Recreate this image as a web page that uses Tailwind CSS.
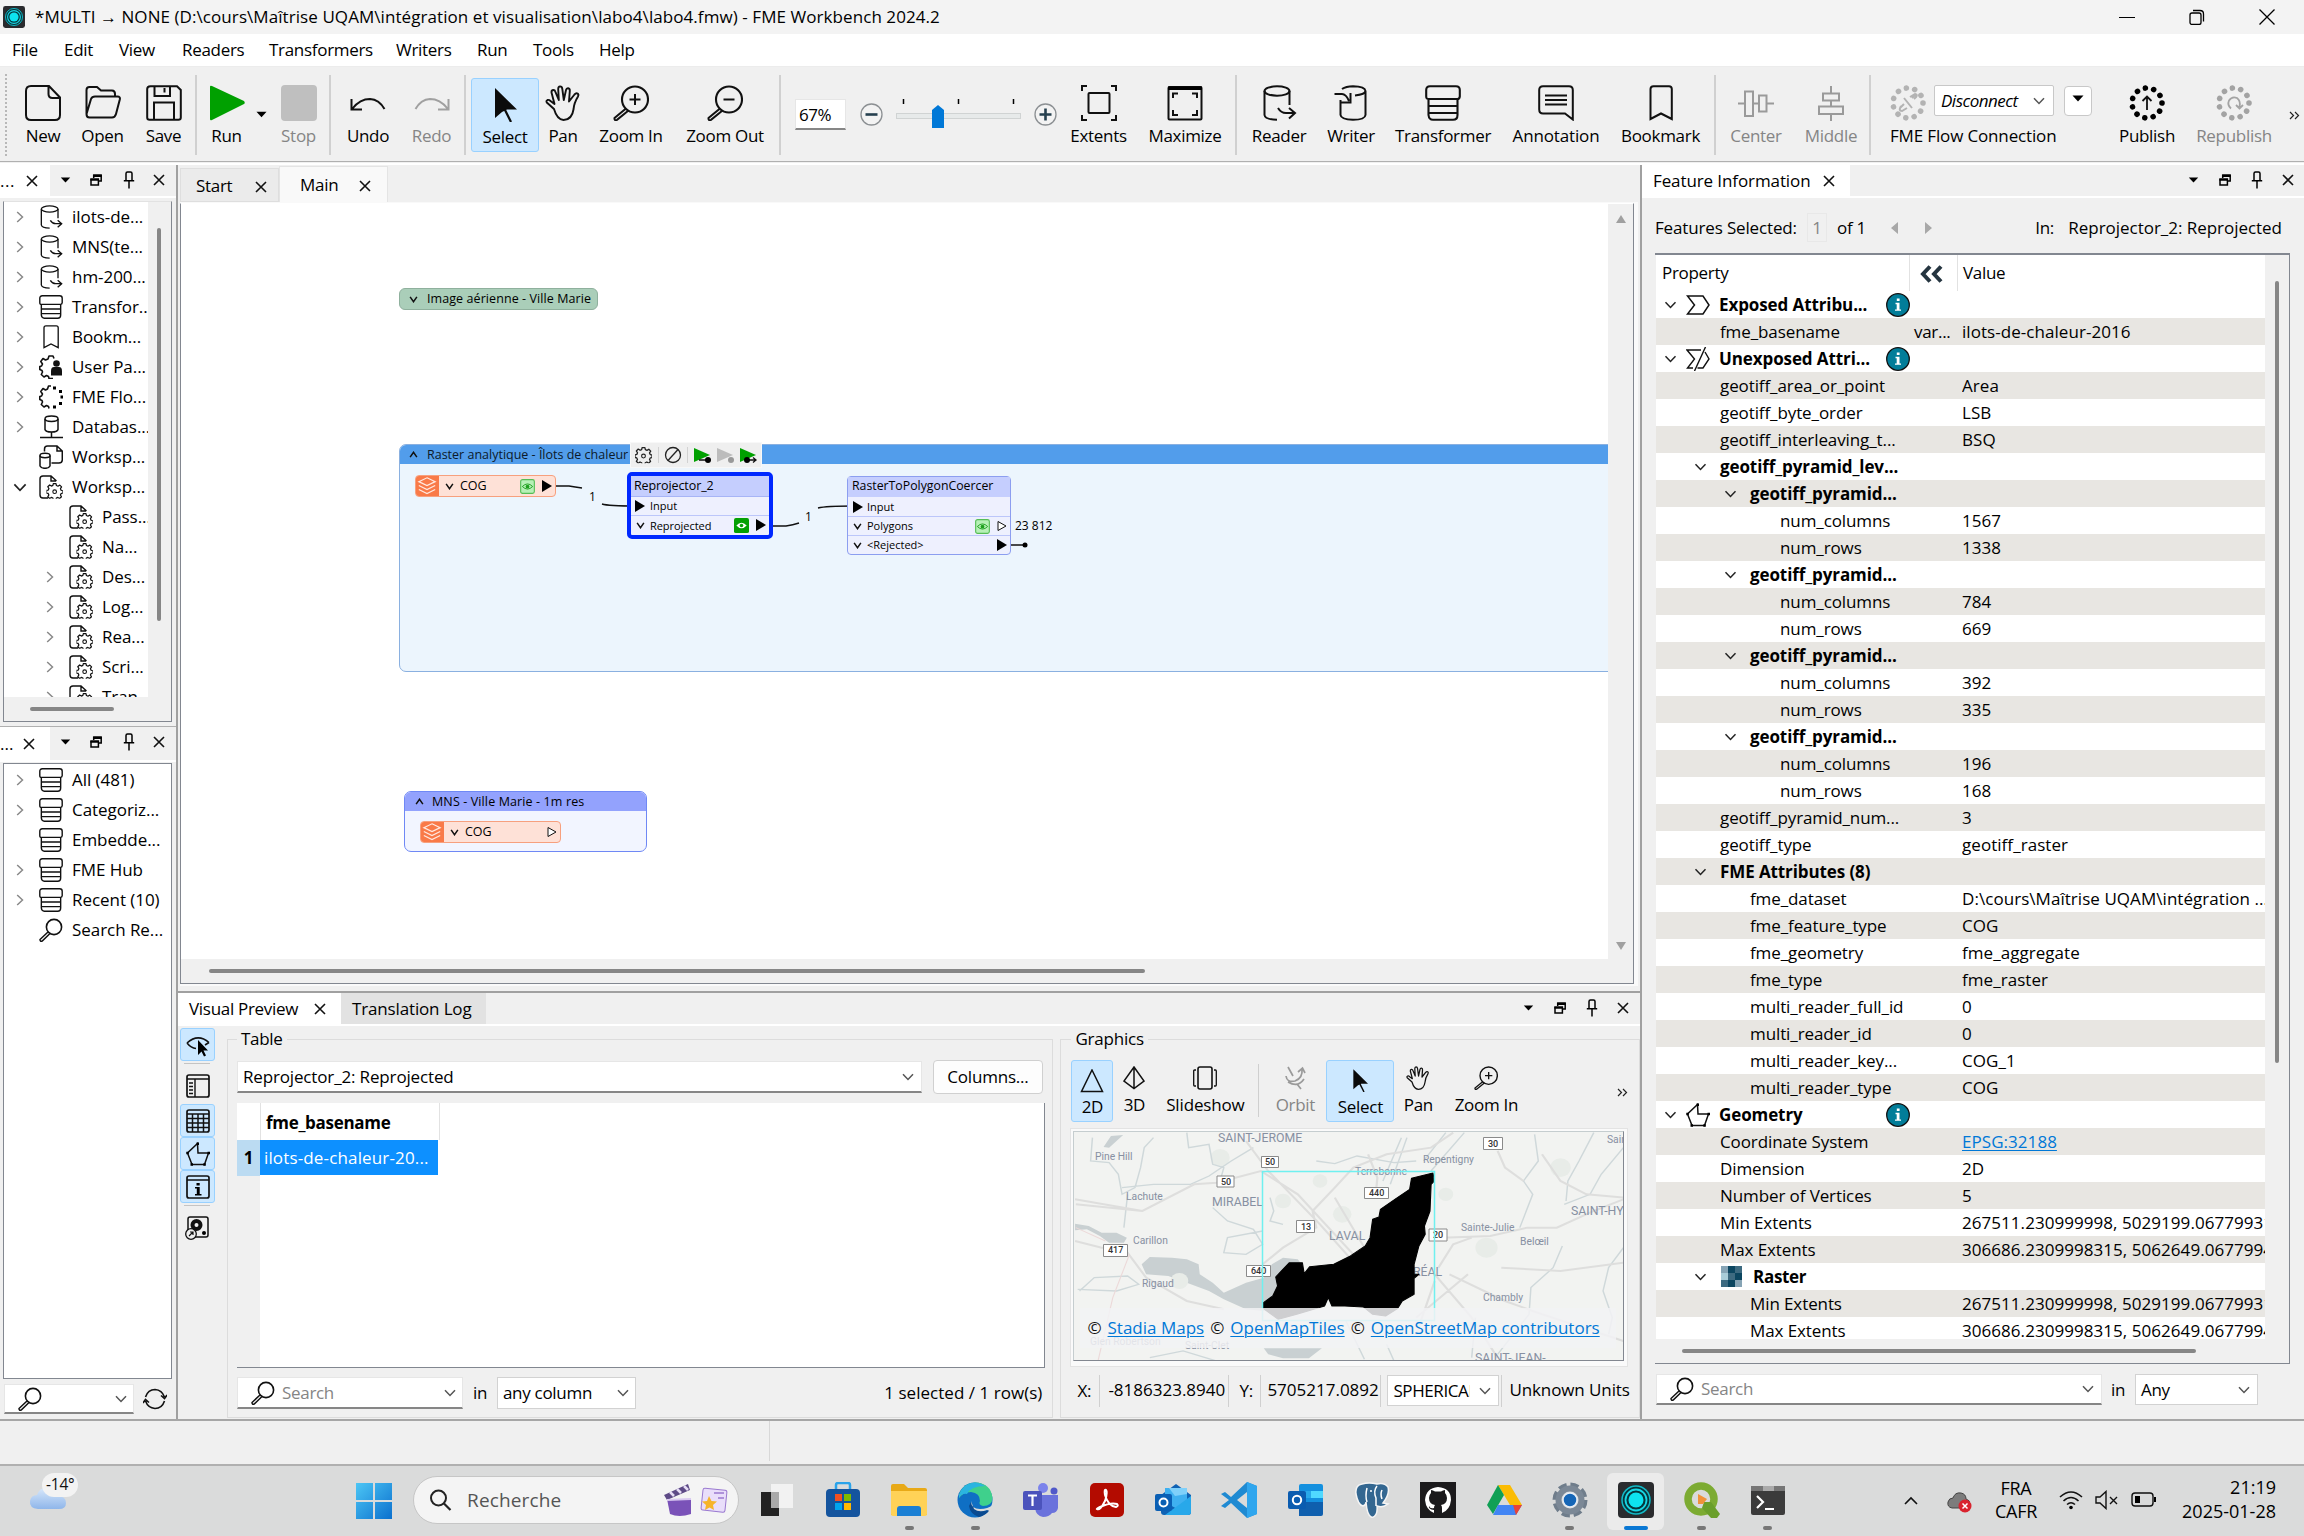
<!DOCTYPE html>
<html lang="fr">
<head>
<meta charset="utf-8">
<title>FME Workbench</title>
<script src="https://cdn.jsdelivr.net/npm/@tailwindcss/browser@4"></script>
</head>
<body class="w-[2304px] h-[1536px] overflow-hidden bg-[#f0f0f0] text-black font-['Open_Sans',sans-serif] text-[17px] leading-[24px] tracking-[-0.3px] whitespace-nowrap">
<svg class="hidden">
  <defs>
    <symbol id="x" viewBox="0 0 12 12"><path d="M1 1L11 11M11 1L1 11" fill="none" stroke="#111" stroke-width="1.6"/></symbol>
    <symbol id="caret" viewBox="0 0 12 7"><path d="M0.5 0.5H11.5L6 6.5Z"/></symbol>
    <symbol id="restore" viewBox="0 0 12 12"><path d="M3.7 4V1.2H11.2V7H8.6M1 5.2H8.4V11H1Z" fill="none" stroke="#000" stroke-width="1.5"/><path d="M3.2 0.6h8.5v2.4h-8.5zM.4 4.6h8.6v2.2H.4z"/></symbol>
    <symbol id="pin" viewBox="0 0 12 18"><path d="M3 9.5V2.6Q3 1 4.5 1h3Q9 1 9 2.600V9.500M.8 9.800H11.200M6 10V17.500" fill="none" stroke="#000" stroke-width="1.500"/></symbol>
    <symbol id="chev" viewBox="0 0 12 8"><path d="M1 1.200L6 6.500L11 1.200" fill="none" stroke="currentColor" stroke-width="1.500"/></symbol>
    <symbol id="chevb" viewBox="0 0 12 9"><path d="M1.500 1L6 7.500L10.500 1" fill="none" stroke="#111" stroke-width="2"/></symbol>
    <symbol id="new" viewBox="0 0 36 36"><path d="M6 1H24L35 12.500V30Q35 35 30 35H6Q1 35 1 30V6Q1 1 6 1ZM23.500 1.500V9Q23.500 13 27.500 13H34.500" fill="none" stroke="#111" stroke-width="2"/></symbol>
    <symbol id="open" viewBox="0 0 36 36"><path d="M1.500 29V5Q1.500 2 4.500 2H12L16 5.500H27Q30 5.500 30 9V11.500M1.500 29L6 14Q7 11.500 10 11.500H32.500Q35.500 11.500 34.800 14.500L31 29Q30 32.500 27 32.500H4.500Q1.500 32.500 1.500 29Z" fill="none" stroke="#111" stroke-width="2"/></symbol>
    <symbol id="save" viewBox="0 0 36 36"><path d="M4.500 1.200H31L34.800 5V32.500Q34.800 34.800 32.500 34.800H3.500Q1.200 34.800 1.200 32.500V4Q1.200 1.200 4.500 1.200ZM8 34.500V17.500H28V34.500M8.500 1.500V11H24V1.500M18.500 3V7.500" fill="none" stroke="#111" stroke-width="2"/></symbol>
    <symbol id="undo" viewBox="0 0 36 36"><path d="M1.500 14V24.500H12M2.500 23.500Q10 14 20 14Q29 14.500 34.500 24" fill="none" stroke="currentColor" stroke-width="2"/></symbol>
    <symbol id="arrow" viewBox="0 0 36 36"><path d="M8 2V32L15 26L20 23.500L30 23.500Z" fill="#0b0b0b"/><path d="M17.500 23L24 36" stroke="#0b0b0b" stroke-width="2.200"/></symbol>
    <symbol id="hand" viewBox="0 0 36 36"><path d="M9 24L1.800 17.500Q.8 15.800 2.500 15Q4 14.500 5.500 16L9.500 19L6.500 7.500Q6.300 5.300 8 5Q9.800 4.800 10.400 6.800L13.800 15L13.200 4Q13.200 1.600 15.100 1.400Q17 1.400 17.300 3.800L18.800 15L21 5Q21.500 3 23.200 3.200Q25 3.500 24.800 5.800L24 16.500L29.500 9.500Q31 7.800 32.600 8.600Q34 9.600 33 11.500Q29 18 28.600 24Q27 35 18.500 35Q12 34.500 9 24Z" fill="none" stroke="#111" stroke-width="1.900" stroke-linejoin="round"/></symbol>
    <symbol id="zin" viewBox="0 0 36 36"><circle cx="22" cy="14.500" r="13" fill="none" stroke="#111" stroke-width="2.100"/><path d="M13 23.500L1.500 33Q1.200 36 4 34.800L15.500 25.500M22 9V20M16.500 14.500H27.500" fill="none" stroke="#111" stroke-width="2"/></symbol>
    <symbol id="zout" viewBox="0 0 36 36"><circle cx="22" cy="14.500" r="13" fill="none" stroke="#111" stroke-width="2.100"/><path d="M13 23.500L1.500 33Q1.200 36 4 34.800L15.500 25.500M16.500 14.500H27.500" fill="none" stroke="#111" stroke-width="2"/></symbol>
    <symbol id="mag" viewBox="0 0 24 24"><circle cx="15" cy="9" r="7.600" fill="none" stroke="#111" stroke-width="1.600"/><path d="M9 14L1 21.500Q1 23.800 3.200 23L11 15.500" fill="none" stroke="#111" stroke-width="1.500"/></symbol>
    <symbol id="extents" viewBox="0 0 36 36"><rect x="7.500" y="8" width="21" height="20" rx="1" fill="none" stroke="#111" stroke-width="2"/><path d="M1 6V1H6M30 1H35V6M35 30V35H30M6 35H1V30" fill="none" stroke="#111" stroke-width="2"/></symbol>
    <symbol id="maxi" viewBox="0 0 36 36"><rect x="1.500" y="2" width="33" height="32.500" rx="1" fill="none" stroke="#111" stroke-width="2"/><path d="M1 1.500H35V5H1Z"/><path d="M6 13V8.500H11M25 8.500H30V13M30 25V30H25M11 30H6V25" fill="none" stroke="#111" stroke-width="2"/></symbol>
    <symbol id="reader" viewBox="0 0 36 36"><ellipse cx="16" cy="6" rx="12.500" ry="4.700" fill="none" stroke="#111" stroke-width="2"/><path d="M3.500 6V30Q4 34.500 16 34.800M28.500 6V20M17 23Q20 28 25 28H33M28 23L34 28L28 33.500" fill="none" stroke="#111" stroke-width="2"/></symbol>
    <symbol id="writer" viewBox="0 0 36 36"><path d="M9 4Q13 1.200 20 1.200Q32 1.500 32.500 6Q32 9.500 22 10.500M32.500 6V30Q32 34.800 20 34.800Q8 34.500 7.500 30V15M1.500 9H9Q13 9 16 16M17.500 8V17.500H8" fill="none" stroke="#111" stroke-width="2"/></symbol>
    <symbol id="trans" viewBox="0 0 36 36"><path d="M5 1.200H31Q34.800 1.200 34.800 5V11.500Q34.500 14 32.500 14H3.500Q1.200 14 1.200 11.500V5Q1.200 1.200 5 1.200ZM3.500 14V30Q4 34.800 8 34.800H28Q32.500 34.800 32.500 30V14M3.500 21H32.500M3.500 28H32.500" fill="none" stroke="#111" stroke-width="2.100"/></symbol>
    <symbol id="annot" viewBox="0 0 36 36"><path d="M5 1.200H31Q34.800 1.200 34.800 5V34.500L27 28.500H5Q1.200 28.500 1.200 24.500V5Q1.200 1.200 5 1.200Z" fill="none" stroke="#111" stroke-width="2"/><path d="M7 10.500H29M7 15H29M7 19.500H29" stroke="#111" stroke-width="2.200"/></symbol>
    <symbol id="bookmark" viewBox="0 0 36 36"><path d="M7.500 34V4Q7.500 1.200 10.500 1.200H26Q28.800 1.200 28.800 4V34L18 28.500Z" fill="none" stroke="#111" stroke-width="2"/></symbol>
    <symbol id="center" viewBox="0 0 36 36"><path d="M0 18.500H7M15 18.500H21M28.500 18.500H36M7 6.500H15V31H7ZM21 10.500H28.500V26.500H21Z" fill="none" stroke="#9a9a9a" stroke-width="2"/></symbol>
    <symbol id="middle" viewBox="0 0 36 36"><path d="M18 1V8.500M18 15.500V21.500M18 29V36M10 8.500H26V15.500H10ZM6 21.500H30V29H6Z" fill="none" stroke="#9a9a9a" stroke-width="2"/></symbol>
    <symbol id="dots" viewBox="0 0 36 36"><circle cx="18" cy="18" r="15" fill="none" stroke="currentColor" stroke-width="5.600" stroke-linecap="round" stroke-dasharray="0.010 8.558"/></symbol>
    <symbol id="gear" viewBox="0 0 24 24"><path d="M10 1.500h4l.6 3 2.300 1 2.600-1.700 2.700 2.700-1.700 2.600 1 2.300 2.500.6v0l-.0 3.600-2.500.6-1 2.200 1.500 2.500-2.700 2.700-2.600-1.700-2.200 1-.6 2.600h-3.900l-.6-2.600-2.300-1-2.500 1.700-2.700-2.700 1.600-2.600-1-2.200-2.500-.6v-3.800l2.600-.6 1-2.200-1.700-2.600 2.700-2.700 2.600 1.700 2.200-1z" fill="none" stroke="currentColor" stroke-width="1.800" stroke-linejoin="round"/><circle cx="12" cy="13.500" r="2.700" fill="none" stroke="currentColor" stroke-width="1.600"/></symbol>
    <symbol id="wsp" viewBox="0 0 24 24"><path d="M9 23H4Q1 23 1 20V4Q1 1 4 1H12L17.500 6M12 1V6H17" fill="none" stroke="#111" stroke-width="1.400"/><g transform="translate(7.500 7.500) scale(.68)" color="#111"><use href="#gear" width="24" height="24"/></g></symbol>
    <symbol id="user" viewBox="0 0 24 24"><path d="M15 3.500L14 1H10L9 4L6.500 5L4 3.500L1.800 6.500L3.500 9L2.600 11L.8 11.500V14.500L3 15.500L3.500 17L2.300 19.500L5 22L7.500 20.500L9.500 21.500L10 23.500H14" fill="none" stroke="#111" stroke-width="1.600" stroke-linejoin="round"/><circle cx="17.500" cy="8.500" r="3.300" fill="#111"/><path d="M12 20.500V16Q12 12 15 12H20Q23 12 23 16V20.500Z" fill="#111"/></symbol>
    <symbol id="flow" viewBox="0 0 24 24"><path d="M12 1H9.500L8.500 4L6.500 5L4 3.500L1.800 6.500L3.500 9L2.600 11L.8 11.500V14.500L3 15.500L3.500 17L2.300 19.500L5 22L7.500 20.500L9.500 21.500L10 23.500" fill="none" stroke="#111" stroke-width="1.600" stroke-linejoin="round"/><path d="M14 1.500h3v3h-3zM20 5h3v3h-3zM21.500 10.500h2.500v3h-2.500zM20 17h3v3h-3zM14 20.500h3v3h-3z"/></symbol>
    <symbol id="db" viewBox="0 0 24 24"><ellipse cx="12.500" cy="3.800" rx="6.500" ry="2.700" fill="none" stroke="#111" stroke-width="1.500"/><path d="M6 4V14.500Q6.500 17 12.500 17Q18.500 17 19 14.500V4M12.500 17V22.500M1 22.500H24" fill="none" stroke="#111" stroke-width="1.500"/></symbol>
    <symbol id="wres" viewBox="0 0 24 24"><path d="M5.500 6.500V4Q5.500 1 8.500 1H18L23.300 6V15Q23 18 20 18H12.500M18 1V6H23" fill="none" stroke="#111" stroke-width="1.500"/><ellipse cx="6" cy="10.500" rx="5" ry="2.200" fill="none" stroke="#111" stroke-width="1.500"/><path d="M1 10.500V21Q2 23.300 6 23.300Q10 23.300 11 21V10.500" fill="none" stroke="#111" stroke-width="1.500"/></symbol>
    <symbol id="refresh" viewBox="0 0 24 24"><path d="M2.500 10Q5 2.500 12 2.500Q19 3 21.500 10M21.500 14Q19 21.500 12 21.500Q5 21 2.500 14M18 8.500L21.500 11.500L24 8M0 16L2.500 12.500L6 15.500" fill="none" stroke="#111" stroke-width="1.600"/></symbol>
    <symbol id="geom" viewBox="0 0 24 24"><path d="M11.500 1.500L12 11H22.500L18.500 22.500H6L1.500 11Z" fill="none" stroke="#111" stroke-width="1.500"/><path d="M10.500 .5h2.500v2.500h-2.500zM21.500 9.800H24v2.500h-2.500zM17.300 21.200h2.500v2.500h-2.500zM4.500 21.200H7v2.500H4.500zM.3 9.800h2.500v2.500H.3z"/></symbol>
    <symbol id="sigma" viewBox="0 0 24 24"><path d="M1.500 3H17L23 12L17 21H1.500L8.500 12Z" fill="none" stroke="#111" stroke-width="1.500"/></symbol>
    <symbol id="nsigma" viewBox="0 0 24 24"><path d="M15 3H1L8.500 12L1.500 21H7M19 5L23 12L17 21H11.500M19.500 0L8.500 24" fill="none" stroke="#111" stroke-width="1.400"/></symbol>
    <symbol id="info" viewBox="0 0 24 24"><circle cx="12" cy="12" r="11.300" fill="#027d99" stroke="#111" stroke-width="1.300"/><path d="M10.800 5.500h2.800v2.600h-2.800zM9.500 9.800h4v6.600h1.500v1.400H9v-1.400h1.700v-5.200H9.500z" fill="#fff"/></symbol>
    <symbol id="rast" viewBox="0 0 21 21"><path d="M0 0h21v21H0z" fill="#3d6a80"/><path d="M7 0h7v7H7zM14 7h7v7h-7zM7 14h7v7H7z" fill="#0c4660"/><path d="M0 7h7v7H0z" fill="#a9ccd8"/><path d="M0 0h7v7H0zM14 14h7v7h-7z" fill="#86a4b5"/></symbol>
    <symbol id="layers" viewBox="0 0 24 22"><path d="M12 2L21 6.200L12 10.500L3 6.200ZM3 10.500L12 15L21 10.500M3 14.800L12 19.300L21 14.800" fill="none" stroke="#ffe9e0" stroke-width="1.300"/></symbol>
    <symbol id="eye" viewBox="0 0 16 16"><rect x=".7" y=".7" width="14.600" height="14.600" rx="2" fill="#b7f0b7" stroke="#55bd55" stroke-width="1.200"/><path d="M2.500 8Q8 2.500 13.500 8Q8 13.500 2.500 8Z" fill="none" stroke="#1fa01f" stroke-width="1"/><circle cx="8" cy="8" r="2" fill="#1fa01f"/></symbol>
    <symbol id="eyeon" viewBox="0 0 16 16"><rect width="16" height="16" rx="2" fill="#04a004"/><path d="M2.500 8Q8 2 13.500 8Q8 14 2.500 8Z" fill="#fff"/><circle cx="8" cy="8" r="1.900" fill="#04a004"/></symbol>
    <symbol id="fme" viewBox="0 0 36 36"><rect width="36" height="36" rx="4" fill="#2a2b2e"/><circle cx="18" cy="18" r="15" fill="#06363c"/><circle cx="18" cy="18" r="14" fill="none" stroke="#17b9c6" stroke-width="1.500"/><circle cx="18" cy="18" r="10.500" fill="none" stroke="#18d6e4" stroke-width="1.800"/><circle cx="18" cy="18" r="7.500" fill="#0de3f0"/></symbol>
    <symbol id="win" viewBox="0 0 24 24"><rect x="1" y="1" width="22" height="22" rx="2" fill="none" stroke="#111" stroke-width="1.700"/><path d="M1 5H23" stroke="#111" stroke-width="1.500"/></symbol>
  </defs>
</svg>

<!-- title bar -->
<header class="h-[34px] flex items-center bg-[#f3f3f3] pl-[3px]">
  <svg class="w-[22px] h-[22px]"><use href="#fme"/></svg>
  <span class="ml-[10px] tracking-[0.07px]">*MULTI → NONE (D:\cours\Maîtrise UQAM\intégration et visualisation\labo4\labo4.fmw) - FME Workbench 2024.2</span>
  <div class="ml-auto flex items-center pr-[29px] gap-[54px]">
    <svg class="w-4 h-4"><path d="M0 8.500H16" stroke="#000"/></svg>
    <svg class="w-4 h-4"><rect x="1" y="4" width="11" height="11.500" rx="2" fill="none" stroke="#000" stroke-width="1.300"/><path d="M4 1.500H11Q14.500 1.500 14.500 5V12.500" fill="none" stroke="#000" stroke-width="1.300"/></svg>
    <svg class="w-4 h-4"><path d="M.5 .5L15.500 15.500M15.500 .5L.5 15.500" stroke="#000" stroke-width="1.300"/></svg>
  </div>
</header>
<nav class="h-[32px] flex items-center bg-white pl-[12px] gap-[25px]">
  <span class="w-[27px]">File</span><span class="w-[30px]">Edit</span><span class="w-[38px]">View</span><span class="w-[62px]">Readers</span><span class="w-[102px]">Transformers</span><span class="w-[56px]">Writers</span><span class="w-[31px]">Run</span><span class="w-[41px]">Tools</span><span>Help</span>
</nav>

<!-- main toolbar -->
<div class="h-[99px] flex items-start border-t border-[#ececec] relative">
  <div class="w-[12px] h-[95px] pt-[7px] pl-[5px]"><div class="h-[82px] border-l-2 border-dotted border-[#b8b8b8]"></div></div>
  <div class="w-[62px] pt-[18px] flex flex-col items-center"><svg class="w-9 h-9"><use href="#new"/></svg><span class="mt-[3px]">New</span></div>
  <div class="w-[57px] pt-[18px] flex flex-col items-center"><svg class="w-9 h-9"><use href="#open"/></svg><span class="mt-[3px]">Open</span></div>
  <div class="w-[64px] pt-[18px] pl-px flex flex-col items-center"><svg class="w-9 h-9"><use href="#save"/></svg><span class="mt-[3px]">Save</span></div>
  <div class="w-[2px] h-[80px] mt-[8px] bg-[#d0d0d0]"></div>
  <div class="w-[59px] pt-[18px] flex flex-col items-center"><svg class="w-9 h-9"><path d="M1 2Q1 0 3 1L35 16Q36.500 18 35 19L3 35Q1 36 1 34Z" fill="#00a000"/></svg><span class="mt-[3px]">Run</span></div>
  <svg class="w-[11px] h-[7px] mr-px mt-[44px]"><use href="#caret"/></svg>
  <div class="w-[61px] pt-[18px] flex flex-col items-center text-[#858585]"><div class="w-9 h-9 rounded bg-[#bfbfbf]"></div><span class="mt-[3px]">Stop</span></div>
  <div class="w-[2px] h-[80px] mt-[8px] bg-[#d0d0d0]"></div>
  <div class="w-[74px] pt-[18px] flex flex-col items-center"><svg class="w-9 h-9 text-[#111]"><use href="#undo"/></svg><span class="mt-[3px]">Undo</span></div>
  <div class="w-[53px] pt-[18px] flex flex-col items-center text-[#858585]"><svg class="w-9 h-9 -scale-x-100 text-[#a0a0a0]"><use href="#undo"/></svg><span class="mt-[3px]">Redo</span></div>
  <div class="w-[2px] h-[80px] mt-[8px] ml-[6px] mr-[5px] bg-[#d0d0d0]"></div>
  <div class="w-[68px] h-[74px] mt-[11px] pt-[7px] flex flex-col items-center rounded-[3px] border border-[#99d1ff] bg-[#cce8ff]"><svg class="w-9 h-9"><use href="#arrow"/></svg><span class="mt-[3px]">Select</span></div>
  <div class="w-[48px] pt-[18px] flex flex-col items-center"><svg class="w-9 h-9"><use href="#hand"/></svg><span class="mt-[3px]">Pan</span></div>
  <div class="w-[88px] pt-[18px] flex flex-col items-center"><svg class="w-9 h-9"><use href="#zin"/></svg><span class="mt-[3px]">Zoom In</span></div>
  <div class="w-[100px] pt-[18px] mr-[2px] flex flex-col items-center"><svg class="w-9 h-9"><use href="#zout"/></svg><span class="mt-[3px]">Zoom Out</span></div>
  <div class="w-[2px] h-[80px] mt-[8px] ml-[2px] mr-[14px] bg-[#d0d0d0]"></div>
  <div class="w-[51px] h-[31px] mt-[32px] pl-[3px] pt-[3px] bg-white border border-[#e6e6e6] border-b-2 border-b-[#868686] tracking-[-0.5px]">67%</div>
  <svg class="w-[23px] h-[23px] mt-[36px] ml-[14px]"><circle cx="11.500" cy="11.500" r="10.500" fill="#f3f3f3" stroke="#8c9093" stroke-width="1.300"/><path d="M5.500 11.500H17.500" stroke="#26404f" stroke-width="2.600"/></svg>
  <svg class="w-[125px] h-[32px] mt-[31px] mx-[13px]"><path d="M7.500 1v5M62.500 1v5M117.500 1v5" stroke="#000" stroke-width="1.500"/><rect x=".5" y="15.500" width="124" height="5" fill="#e7eaea" stroke="#d0d3d3"/><path d="M36 30V12L42 7L48 12V30Z" fill="#0078d7"/></svg>
  <svg class="w-[23px] h-[23px] mt-[36px]"><circle cx="11.500" cy="11.500" r="10.500" fill="#f3f3f3" stroke="#8c9093" stroke-width="1.300"/><path d="M5.500 11.500H17.500M11.500 5.500V17.500" stroke="#26404f" stroke-width="2.600"/></svg>
  <div class="w-[83px] pt-[18px] flex flex-col items-center"><svg class="w-9 h-9"><use href="#extents"/></svg><span class="mt-[3px]">Extents</span></div>
  <div class="w-[90px] pt-[18px] flex flex-col items-center"><svg class="w-9 h-9"><use href="#maxi"/></svg><span class="mt-[3px]">Maximize</span></div>
  <div class="w-[2px] h-[80px] mt-[8px] ml-[5px] bg-[#d0d0d0]"></div>
  <div class="w-[84px] pt-[18px] flex flex-col items-center"><svg class="w-9 h-9"><use href="#reader"/></svg><span class="mt-[3px]">Reader</span></div>
  <div class="w-[60px] pt-[18px] flex flex-col items-center"><svg class="w-9 h-9"><use href="#writer"/></svg><span class="mt-[3px]">Writer</span></div>
  <div class="w-[124px] pt-[18px] flex flex-col items-center"><svg class="w-9 h-9"><use href="#trans"/></svg><span class="mt-[3px]">Transformer</span></div>
  <div class="w-[102px] pt-[18px] flex flex-col items-center"><svg class="w-9 h-9"><use href="#annot"/></svg><span class="mt-[3px] tracking-[-0.15px]">Annotation</span></div>
  <div class="w-[107px] pt-[18px] flex flex-col items-center"><svg class="w-9 h-9"><use href="#bookmark"/></svg><span class="mt-[3px]">Bookmark</span></div>
  <div class="w-[2px] h-[80px] mt-[8px] bg-[#d0d0d0]"></div>
  <div class="w-[80px] pt-[18px] flex flex-col items-center text-[#858585]"><svg class="w-9 h-9"><use href="#center"/></svg><span class="mt-[3px]">Center</span></div>
  <div class="w-[70px] pt-[18px] flex flex-col items-center text-[#858585]"><svg class="w-9 h-9"><use href="#middle"/></svg><span class="mt-[3px]">Middle</span></div>
  <div class="w-[2px] h-[80px] mt-[8px] ml-[3px] mr-[19px] bg-[#d0d0d0]"></div>
  <div class="w-[202px] mr-px pt-[18px] flex flex-col">
    <div class="flex h-9">
      <svg class="w-9 h-9 text-[#b3b3b3]"><use href="#dots"/><path d="M10 23L14 19M22 13L26 9M11 21Q8 26 12 26L17 23M24 14Q29 10 25 9L20 12M14 13L22 23" fill="none" stroke="currentColor" stroke-width="2"/></svg>
      <div class="w-[120px] h-[31px] ml-[8px] flex items-center pl-[6px] pr-[8px] bg-white border border-[#c8c8c8] rounded-[2px] italic tracking-[-0.5px]">Disconnect<svg class="w-[12px] h-[8px] ml-auto text-[#555]"><use href="#chev"/></svg></div>
      <div class="w-[28px] h-[30px] ml-[10px] mt-px flex items-center justify-center bg-white border border-[#c8c8c8] rounded"><svg class="w-[12px] h-[7px] mb-[6px]"><use href="#caret"/></svg></div>
    </div>
    <span class="mt-[3px] tracking-[-0.15px]">FME Flow Connection</span>
  </div>
  <div class="w-[78px] ml-[15px] pt-[18px] flex flex-col items-center"><svg class="w-9 h-9"><use href="#dots"/><path d="M18 25V12M13.500 16L18 11.500L22.500 16" fill="none" stroke="#111" stroke-width="1.800"/></svg><span class="mt-[3px]">Publish</span></div>
  <div class="w-[96px] pt-[18px] flex flex-col items-center text-[#858585]"><svg class="w-9 h-9 text-[#a3a3a3]"><use href="#dots"/><path d="M15 23.500Q11 20 13 15.500Q16 11 21 13Q25 16 23.500 22M20 20L23.500 23.500L27 20" fill="none" stroke="#a3a3a3" stroke-width="1.800"/></svg><span class="mt-[3px]">Republish</span></div>
  <svg class="w-[12px] h-[9px] mt-[44px] ml-[7px]"><path d="M1 1L4.500 4.500L1 8M6 1L9.500 4.500L6 8" fill="none" stroke="#222" stroke-width="1.200"/></svg>
  <div class="absolute left-0 right-0 bottom-0 h-[4px] border-t border-[#b0b0b0] border-b-2 border-b-white"></div>
</div>

<!-- work area -->
<main class="h-[1254px] flex">
  <!-- left docks -->
  <div class="w-[176px] flex flex-col">
    <div class="h-[33px] flex border-b-2 border-white">
      <div class="w-[50px] bg-white flex items-center"><span class="w-[26px] tracking-[0.5px]">...</span><svg class="w-[12px] h-[12px]"><use href="#x"/></svg></div>
      <svg class="w-[11px] h-[6px] ml-[10px] mt-[12px]"><use href="#caret"/></svg>
      <svg class="w-[12px] h-[12px] ml-[19px] mt-[9px]"><use href="#restore"/></svg>
      <svg class="w-[12px] h-[18px] ml-[21px] mt-[6px]"><use href="#pin"/></svg>
      <svg class="w-[12px] h-[12px] ml-[18px] mt-[9px]"><use href="#x"/></svg>
    </div>
    <div class="h-[521px] ml-[3px] mr-[4px] mt-[3px] border border-[#828790] border-t-[#e2e2e2] flex">
      <div class="w-[144px] flex flex-col">
        <div id="nav" class="h-[495px] bg-white overflow-hidden"></div>
        <div class="w-[84px] h-[4px] mt-[10px] ml-[26px] rounded-full bg-[#868686]"></div>
      </div>
      <div class="w-[4px] h-[393px] ml-[9px] mt-[26px] rounded-full bg-[#868686]"></div>
    </div>
    <div class="h-[36px] mt-[4px] border-t border-[#b0b0b0] flex border-b-2 border-b-white">
      <div class="w-[50px] bg-white flex items-center"><span class="w-[23px] tracking-[0]">...</span><svg class="w-[12px] h-[12px]"><use href="#x"/></svg></div>
      <svg class="w-[11px] h-[6px] ml-[10px] mt-[12px]"><use href="#caret"/></svg>
      <svg class="w-[12px] h-[12px] ml-[19px] mt-[9px]"><use href="#restore"/></svg>
      <svg class="w-[12px] h-[18px] ml-[21px] mt-[6px]"><use href="#pin"/></svg>
      <svg class="w-[12px] h-[12px] ml-[18px] mt-[9px]"><use href="#x"/></svg>
    </div>
    <div id="gallery" class="h-[616px] ml-[3px] mr-[4px] mt-px pt-px bg-white border border-[#828790]"></div>
    <div class="flex mt-[5px] ml-[4px] items-center">
      <div class="w-[130px] h-[30px] bg-white border border-[#e6e6e6] border-b-2 border-b-[#868686] flex items-center pl-[13px] pr-[6px]"><svg class="w-[24px] h-[24px]"><use href="#mag"/></svg><svg class="w-[12px] h-[8px] ml-auto text-[#555]"><use href="#chev"/></svg></div>
      <svg class="w-[24px] h-[24px] ml-[9px]"><use href="#refresh"/></svg>
    </div>
  </div>

  <!-- centre column -->
  <div class="w-[1464px] border-l-2 border-[#a0a0a0] flex flex-col">
    <div class="h-[826px] flex flex-col pl-[2px]">
      <div class="h-[37px] flex items-end">
        <div class="w-[99px] h-[34px] flex items-center pl-[15px] pt-[2px] bg-[#ebebeb] border border-[#dedede]">Start<svg class="w-[12px] h-[12px] ml-[23px] mt-[2px]"><use href="#x"/></svg></div>
        <div class="w-[109px] h-[36px] flex items-center pl-[20px] bg-[#f9f9f9] border border-b-0 border-[#e4e4e4]">Main<svg class="w-[12px] h-[12px] ml-[21px] mt-[2px]"><use href="#x"/></svg></div>
      </div>
      <div class="h-[784px] w-[1458px] border-t border-r-4 border-r-[#fafafa] border-b-2 border-b-[#fafafa] border-t-[#f9f9f9]">
      <div class="h-[781px] w-[1454px] border border-[#828790] border-t-white flex">
        <div class="w-[1427px] flex flex-col">
          <div class="h-[755px] relative overflow-hidden bg-white text-[12px] leading-[16px] tracking-[0]">
            <!-- collapsed bookmark -->
            <div class="absolute left-[218px] top-[84px] w-[199px] h-[22px] rounded-[6px] border border-[#8fb09d] bg-[#aaceb9] flex items-center pl-[9px] text-[12.5px] font-medium tracking-[0.08px]"><svg class="w-[9px] h-[7px] mr-[9px]"><use href="#chevb"/></svg>Image aérienne - Ville Marie</div>
            <!-- heat island bookmark -->
            <div class="absolute left-[218px] top-[240px] w-[1250px] h-[228px] rounded-[7px] border border-[#8ab0e0] bg-[#ecf5fd] overflow-hidden">
              <div class="h-[19px] bg-[#529deb] flex items-center pl-[9px] text-[12.5px] font-medium text-[#0c1a2a]"><svg class="w-[9px] h-[7px] mr-[9px] -scale-y-100"><use href="#chevb"/></svg>Raster analytique - Îlots de chaleur</div>
            </div>
            <svg class="absolute left-0 top-0 w-[1427px] h-[755px]">
              <g fill="none" stroke="#111" stroke-width="1.400"><path d="M370 282H388Q394 283 401 284M421 300Q427 302 456 302M584 322H605Q612 321 618 319M637 304Q645 302 672 302M826 341H844"/></g><circle cx="844" cy="341" r="2.500"/>
            </svg>
            <div class="absolute left-[234px] top-[271px] w-[141px] h-[22px] rounded-[4px] border border-[#f7a07e] bg-[#fee1d7] flex items-center overflow-hidden text-[12.5px] font-medium"><div class="w-[23px] h-full bg-[#f97a48]"><svg class="w-[22px] h-[20px]"><use href="#layers"/></svg></div><svg class="w-[9px] h-[7px] ml-[6px] mr-[6px]"><use href="#chevb"/></svg>COG<svg class="w-[15px] h-[15px] absolute left-[104px] top-[3px]"><use href="#eye"/></svg><svg class="w-[10px] h-[12px] absolute left-[126px] top-[4px]"><path d="M0 0L10 6L0 12Z"/></svg></div>
            <span class="absolute left-[408px] top-[285px]">1</span>
            <div class="absolute left-[446px] top-[268px] w-[146px] h-[67px] rounded-[5px] border-4 border-[#0028ff] bg-[#eef0fe]">
              <div class="h-[21px] pl-[3px] pt-[2px] bg-[#c5cefe] border-b border-[#a7b4f6] text-[12.5px] font-medium tracking-[-0.1px]">Reprojector_2</div>
              <div class="h-[19px] pl-[19px] pt-px border-b border-[#bcc6fa] text-[11px]">Input</div>
              <div class="h-[19px] pl-[5px] flex items-center text-[11px] tracking-[-0.05px]"><svg class="w-[9px] h-[7px] mr-[5px]"><use href="#chevb"/></svg>Reprojected<svg class="w-[15px] h-[15px] ml-auto mr-[20px]"><use href="#eyeon"/></svg></div>
              <svg class="absolute left-[4px] top-[24px] w-[10px] h-[12px]"><path d="M0 0L10 6L0 12Z"/></svg>
              <svg class="absolute left-[125px] top-[43px] w-[10px] h-[12px]"><path d="M0 0L10 6L0 12Z"/></svg>
            </div>
            <div class="absolute left-[449px] top-[238px] w-[132px] h-[26px] bg-[#efefef] border border-[#f8f8f8] text-[#222]">
              <svg class="w-[130px] h-[24px]"><svg x="4" y="3.500" width="17" height="17"><use href="#gear"/></svg><path d="M27.500 4V20M56.500 4V20" stroke="#d2d2d2"/><circle cx="42" cy="12" r="7.500" fill="none" stroke="#222" stroke-width="1.300"/><path d="M37 17.500L47 6.500" stroke="#222" stroke-width="1.300"/>
              <path d="M63 5L79 12L63 19Z" fill="#00a000"/><path d="M86 5L102 12L86 19Z" fill="#bcbcbc"/><path d="M109 5L125 12L109 19Z" fill="#00a000"/><path d="M68 17H75M116 17H124M122 14.500L125 17L122 19.500" fill="none" stroke="#111" stroke-width="1.300"/><circle cx="77" cy="17" r="3"/><circle cx="100" cy="17" r="3" fill="#999"/><circle cx="116" cy="17" r="3"/></svg>
            </div>
            <span class="absolute left-[624px] top-[305px]">1</span>
            <div class="absolute left-[666px] top-[272px] w-[164px] h-[79px] rounded-[4px] border border-[#8c9ef0] bg-[#eef0fe]">
              <div class="h-[20px] pl-[4px] pt-px bg-[#c5cefe] text-[12.3px] font-medium">RasterToPolygonCoercer</div>
              <div class="h-[20px] pl-[19px] pt-[2px] border-b border-[#bcc6fa] text-[11px]">Input</div>
              <div class="h-[19px] pl-[5px] flex items-center border-b border-[#bcc6fa] text-[11px]"><svg class="w-[9px] h-[7px] mr-[5px]"><use href="#chevb"/></svg>Polygons<svg class="w-[15px] h-[15px] ml-auto mr-[20px]"><use href="#eye"/></svg></div>
              <div class="h-[18px] pl-[5px] flex items-center text-[11px]"><svg class="w-[9px] h-[7px] mr-[5px]"><use href="#chevb"/></svg>&lt;Rejected&gt;</div>
              <svg class="absolute left-[5px] top-[24px] w-[10px] h-[12px]"><path d="M0 0L10 6L0 12Z"/></svg>
              <svg class="absolute left-[149px] top-[43px] w-[10px] h-[12px]"><path d="M1 1.500L9 6L1 10.500Z" fill="#fff" stroke="#111"/></svg>
              <svg class="absolute left-[149px] top-[62px] w-[10px] h-[12px]"><path d="M0 0L10 6L0 12Z"/></svg>
            </div>
            <span class="absolute left-[834px] top-[314px]">23 812</span>
            <!-- elevation bookmark -->
            <div class="absolute left-[223px] top-[587px] w-[243px] h-[61px] rounded-[7px] border border-[#6f88f5] bg-[#f2f5ff] overflow-hidden text-[12.5px] font-medium">
              <div class="h-[19px] bg-[#93a2fd] flex items-center pl-[10px] tracking-[0.12px]"><svg class="w-[9px] h-[7px] mr-[8px] -scale-y-100"><use href="#chevb"/></svg>MNS - Ville Marie - 1m res</div>
              <div class="relative ml-[15px] mt-[10px] w-[141px] h-[22px] rounded-[4px] border border-[#f7a07e] bg-[#fee1d7] flex items-center overflow-hidden"><div class="w-[23px] h-full bg-[#f97a48]"><svg class="w-[22px] h-[20px]"><use href="#layers"/></svg></div><svg class="w-[9px] h-[7px] ml-[6px] mr-[6px]"><use href="#chevb"/></svg>COG<svg class="w-[10px] h-[12px] absolute left-[126px] top-[4px]"><path d="M1 1.500L9 6L1 10.500Z" fill="#fff" stroke="#111"/></svg></div>
            </div>
          </div>
          <div class="h-[4px] w-[936px] ml-[28px] mt-[10px] rounded-full bg-[#868686]"></div>
        </div>
        <div class="w-[25px] flex flex-col items-center justify-between py-[11px] pb-[33px]">
          <svg class="w-[10px] h-[8px]"><path d="M5 0L10 8H0Z" fill="#a0a0a0"/></svg>
          <svg class="w-[10px] h-[8px]"><path d="M5 8L10 0H0Z" fill="#a0a0a0"/></svg>
        </div>
      </div>
      </div>
    </div>

    <!-- preview dock -->
    <div class="h-[428px] border-t-2 border-[#a0a0a0] flex flex-col">
      <div class="h-[33px] flex border-b-2 border-white">
        <div class="w-[163px] bg-white flex items-center pl-[11px]">Visual Preview<svg class="w-[12px] h-[12px] ml-auto mr-[15px]"><use href="#x"/></svg></div>
        <div class="w-[145px] bg-[#e2e2e2] flex items-center pl-[11px] tracking-[-0.15px]">Translation Log</div>
        <svg class="w-[11px] h-[6px] ml-auto mt-[12px]"><use href="#caret"/></svg>
        <svg class="w-[12px] h-[12px] ml-[20px] mt-[9px]"><use href="#restore"/></svg>
        <svg class="w-[12px] h-[18px] ml-[20px] mt-[6px]"><use href="#pin"/></svg>
        <svg class="w-[12px] h-[12px] ml-[19px] mr-[11px] mt-[9px]"><use href="#x"/></svg>
      </div>
      <div class="flex h-[393px]">
        <div class="w-[37px] ml-[2px] pt-[2px] flex flex-col items-start">
          <div class="w-[35px] h-[33px] rounded-[3px] border border-[#99d1ff] bg-[#cce8ff] flex items-center justify-center"><svg class="w-6 h-6"><path d="M1 10Q12 0 23 9.500M1 10Q5 15 10 15.500M19 12L23 9.500" fill="none" stroke="#111" stroke-width="1.600"/><path d="M12 7V22L15.500 18.500L18 23.500L20 22.500L17.500 17.500H22Z"/></svg></div>
          <div class="w-[26px] h-px ml-[4px] mt-[2px] bg-[#c4c4c4]"></div>
          <div class="w-[35px] h-[35px] mt-[4px] mb-px flex items-center justify-center"><svg class="w-6 h-6"><use href="#win"/><path d="M9 5V23M3 9H7M3 12.500H7M3 16H7M3 19.500H7" stroke="#111" stroke-width="1.400"/></svg></div>
          <div class="w-[35px] h-[33px] rounded-[3px] border border-[#99d1ff] bg-[#cce8ff] flex items-center justify-center"><svg class="w-6 h-6"><use href="#win"/><path d="M1 9.500H23M1 14H23M1 18.500H23M6.500 5V23M12 5V23M17.500 5V23" stroke="#111" stroke-width="1.500"/></svg></div>
          <div class="w-[35px] h-[33px] rounded-[3px] border border-[#99d1ff] bg-[#cce8ff] flex items-center justify-center"><svg class="w-6 h-6"><use href="#geom"/></svg></div>
          <div class="w-[35px] h-[33px] rounded-[3px] border border-[#99d1ff] bg-[#cce8ff] flex items-center justify-center"><svg class="w-6 h-6"><use href="#win"/><path d="M10.500 8h3.200v2.500h-3.200zM9 12h4.700v7h1.800v1.500H9V19h1.800v-5.500H9z"/></svg></div>
          <div class="w-[26px] h-px ml-[4px] mt-[2px] bg-[#c4c4c4]"></div>
          <svg class="w-6 h-6 ml-[5px] mt-[10px]"><rect x="3" y="1" width="20" height="20" rx="2" fill="none" stroke="#111" stroke-width="1.500"/><circle cx="11.500" cy="9" r="4" fill="none" stroke="#111" stroke-width="4"/><circle cx="19" cy="17" r="2"/><circle cx="6" cy="18" r="5.300" fill="#f0f0f0" stroke="#111" stroke-width="1.300"/><path d="M4 20L8 16M5 16H8V19" fill="none" stroke="#111" stroke-width="1.200"/></svg>
        </div>

        <fieldset class="relative w-[827px] h-[379px] mt-[13px] ml-[10px] border border-[#dcdcdc]">
          <span class="absolute left-[9px] -top-[13px] px-[4px] bg-[#f0f0f0]">Table</span>
          <div class="flex mt-[20px] ml-[9px] gap-[11px]">
            <div class="w-[685px] h-[32px] mt-px bg-white border border-[#e6e6e6] border-b-2 border-b-[#868686] flex items-center pl-[5px] pr-[7px] tracking-[-0.15px]">Reprojector_2: Reprojected<svg class="w-[12px] h-[8px] ml-auto text-[#555]"><use href="#chev"/></svg></div>
            <div class="w-[110px] h-[34px] bg-[#fdfdfd] border border-[#d0d0d0] rounded flex items-center justify-center tracking-[-0.2px]">Columns...</div>
          </div>
          <div class="w-[808px] h-[265px] ml-[9px] mt-[9px] bg-white border-r border-b border-[#828790] flex flex-col">
            <div class="flex h-[37px]"><div class="w-[23px]"></div><div class="w-[180px] border-x border-[#e2e2e2] flex items-center pl-[5px] pt-[3px] font-bold tracking-[-0.3px]">fme_basename</div></div>
            <div class="flex h-[36px]"><div class="w-[23px] bg-[#bbdbf2] flex items-center justify-center font-bold">1</div><div class="w-[178px] h-[35px] bg-[#0d90ff] text-white flex items-center pl-[4px] tracking-[0.15px]">ilots-de-chaleur-20...</div></div>
            <div class="w-[23px] flex-1 bg-[#f0f0f0]"></div>
          </div>
          <div class="flex ml-[9px] mt-[9px] items-center">
            <div class="w-[226px] h-[32px] bg-white border border-[#e6e6e6] border-b-2 border-b-[#868686] flex items-center pl-[13px] pr-[6px] text-[#858585]"><svg class="w-[24px] h-[24px] mr-[7px]"><use href="#mag"/></svg>Search<svg class="w-[12px] h-[8px] ml-auto text-[#555]"><use href="#chev"/></svg></div>
            <span class="ml-[10px] w-[24px]">in</span>
            <div class="w-[139px] h-[32px] bg-white border border-[#d2d2d2] flex items-center pl-[5px] pr-[6px]">any column<svg class="w-[12px] h-[8px] ml-auto text-[#555]"><use href="#chev"/></svg></div>
            <span class="ml-auto mr-[10px] tracking-[0.03px]">1 selected / 1 row(s)</span>
          </div>
        </fieldset>

        <fieldset class="relative w-[580px] h-[379px] mt-[13px] ml-[7px] border border-[#dcdcdc]">
          <span class="absolute left-[10px] -top-[13px] px-[4px] bg-[#f0f0f0] tracking-[-0.2px]">Graphics</span>
          <div class="flex mt-[20px] ml-[10px] h-[62px]">
            <div class="w-[42px] h-[62px] pt-[8px] flex flex-col items-center rounded-[3px] border border-[#99d1ff] bg-[#cce8ff]"><svg class="w-6 h-6"><path d="M12 1L22.500 22.500H1.500Z" fill="none" stroke="#111" stroke-width="1.500"/></svg><span class="mt-[2px]">2D</span></div>
            <div class="w-[42px] pt-[6px] flex flex-col items-center"><svg class="w-6 h-6"><path d="M12 1L22 15L12 22.500L2 15ZM12 1V22.500" fill="none" stroke="#111" stroke-width="1.500"/></svg><span class="mt-[3px]">3D</span></div>
            <div class="w-[100px] pt-[6px] flex flex-col items-center"><svg class="w-6 h-6"><rect x="5" y="1" width="14" height="22" rx="2" fill="none" stroke="#111" stroke-width="1.600"/><path d="M3 4H1.500Q.7 4 .7 5V19Q.7 20 1.500 20H3M21 4H22.500Q23.300 4 23.300 5V19Q23.300 20 22.500 20H21" fill="none" stroke="#111" stroke-width="1.300"/></svg><span class="mt-[3px] tracking-[-0.15px]">Slideshow</span></div>
            <div class="w-px h-[53px] mt-[4px] ml-[3px] bg-[#cfcfcf]"></div>
            <div class="w-[67px] pl-[5px] pt-[6px] flex flex-col items-center text-[#858585]"><svg class="w-6 h-6"><path d="M5 1L10 10M14 18L18 23M3 10Q4 17 12 15Q20 12 19 3M15 6L19.500 2L22 7M5 16Q15 22 21 13" fill="none" stroke="#9a9a9a" stroke-width="1.700"/></svg><span class="mt-[3px]">Orbit</span></div>
            <div class="w-[68px] h-[62px] pt-[7px] flex flex-col items-center rounded-[3px] border border-[#99d1ff] bg-[#cce8ff]"><svg class="w-6 h-6"><use href="#arrow"/></svg><span class="mt-[3px]">Select</span></div>
            <div class="w-[48px] pt-[6px] flex flex-col items-center"><svg class="w-6 h-6"><use href="#hand"/></svg><span class="mt-[3px]">Pan</span></div>
            <div class="w-[88px] pt-[6px] flex flex-col items-center"><svg class="w-6 h-6"><use href="#zin"/></svg><span class="mt-[3px]">Zoom In</span></div>
            <svg class="w-[12px] h-[9px] mt-[28px] ml-auto mr-[10px]"><path d="M1 1L4.500 4.500L1 8M6 1L9.500 4.500L6 8" fill="none" stroke="#222" stroke-width="1.200"/></svg>
          </div>
          <div class="relative w-[558px] h-[239px] ml-[9px] mt-[6px] p-[2px] pr-[4px] pb-[4px] bg-[#fafafa] border border-[#e3e3e3]">
            <svg class="w-[551px] h-[230px] border border-[#828790] border-l-[#c5cdcf] border-t-[#c5cdcf] bg-[#f2f3f1] font-['Roboto',sans-serif] tracking-[0]">
              <g transform="translate(-13 -151) scale(.37 .3333)">
                <g fill="#c9d0d2"><path d="M38 728L75 735L110 755L150 755L178 770L170 785L130 785L105 765L70 745L38 748Z"/><path d="M218 850L240 828L300 830L340 835L372 850L375 880L410 905L440 935L500 905L548 890L570 850L600 830L640 835L650 850L585 920L550 990L500 985L440 955L400 930L340 905L290 885L230 880Z"/><path d="M548 1102H705L670 1132H600L560 1120Z"/><path d="M115 498L135 465L168 462L150 480L130 500Z"/></g>
                <g fill="#e8ece8"><circle cx="600" cy="660" r="22"/><circle cx="760" cy="700" r="25"/><circle cx="1150" cy="800" r="30"/><circle cx="700" cy="600" r="20"/><circle cx="430" cy="530" r="26"/><circle cx="1350" cy="560" r="28"/><circle cx="1040" cy="640" r="20"/><circle cx="320" cy="900" r="24"/></g>
                <g fill="none" stroke="#cfd8da" stroke-width="4"><path d="M85 470L80 540L130 545L155 580L165 640L200 620L215 560L225 500L250 470M340 455L345 500L400 490L410 550L440 560L430 600M165 620L250 610L350 610L400 585L460 540L520 500M180 640L170 740M410 680L450 720L520 745L545 790L500 820L440 815L450 770L545 750M565 650L575 690L565 720L600 730M690 540L740 548L800 525L900 545L960 540M870 600L920 470M890 610L935 470M980 540L1040 455M1000 570L1090 455M1280 460L1290 540L1250 600L1275 640L1240 740M1440 455L1400 540L1370 600L1365 660M1520 500L1460 580L1430 640L1360 670M1520 800L1480 860L1465 930L1490 1010L1480 1060M1355 795L1330 860L1270 920L1265 1000L1180 1120M50 930L90 890L180 885L210 910L150 930L45 925M240 1130L330 1110L420 1140M770 1020L820 1135M1120 1010L1110 1130M880 1090L900 1140"/></g>
                <g fill="none" stroke="#dededd" stroke-width="6"><path d="M38 655L220 690L360 610L420 605L540 570L640 640L740 760L790 820M500 480L560 570M38 780L110 800L170 800L230 890L340 960L440 985M220 690L40 670M560 570L700 730L780 830M680 690L740 620L790 560L880 520L1000 500L1060 455M680 690L690 740L600 800L545 850M820 800L740 650M1030 770L1160 765L1260 740L1340 740L1440 690L1520 655M1020 860L1060 790L1110 770M960 1010L1100 880M1010 880L1110 1010L1180 1130M1010 900L960 1060M1190 860L1350 870L1520 845M1050 880L1200 960L1300 1000L1520 1080M850 650L855 590L830 520M1180 510L1200 560L1250 600M1300 520L1350 600L1420 640L1520 650"/></g>
                <path d="M185 820L140 950L100 1140M40 740L120 780" fill="none" stroke="#ecd9d9" stroke-width="3"/>
              </g>
              <g fill="#8790a2" font-size="12.300">
                <text x="144" y="10">SAINT-JEROME</text><text x="138" y="74">MIRABEL</text><text x="255" y="108">LAVAL</text><text x="497" y="83">SAINT-HYA</text><text x="339" y="144">RÉAL</text><text x="401" y="230">SAINT-JEAN-</text>
                <g font-size="10.300"><text x="21" y="28">Pine Hill</text><text x="52" y="68">Lachute</text><text x="59" y="112">Carillon</text><text x="68" y="155">Rigaud</text><text x="349" y="31">Repentigny</text><text x="281" y="43">Terrebonne</text><text x="387" y="99">Sainte-Julie</text><text x="446" y="113">Belœil</text><text x="409" y="169">Chambly</text><text x="16" y="213">Glen Robertson</text><text x="111" y="217">Saint-Clet</text><text x="533" y="11">Sain</text></g>
              </g>
              <g fill="#fff" stroke="#8a8a8a"><path d="M187.500 24.500h17v11h-17zM143 44h17v11h-17zM290.500 55.500h24v11h-24zM222.500 88.500h18v12h-18zM29.500 112.500h24v12h-24zM172.500 133.500h24v11h-24zM355 97h18v12h-18zM409.500 5.500h19v12h-19z"/></g>
              <g fill="#333" font-size="9" font-weight="500"><text x="191" y="33">50</text><text x="147" y="53">50</text><text x="295" y="64">440</text><text x="227" y="98">13</text><text x="34" y="121">417</text><text x="177" y="142">640</text><text x="359" y="106">20</text><text x="414" y="15">30</text></g>
              <path transform="translate(-14 -151) scale(.37 .3333)" d="M550 983V965L575 945L588 915L583 888L600 868L620 845L655 845L660 878L675 857L740 850L785 825L825 795L838 770L845 715L862 708L866 685L905 655L945 625L950 592L1008 576L1012 600L1003 610L1000 690L985 735L987 760L970 795L957 850L957 880L970 880L957 892V940L925 960L912 983L880 1005L845 1000L820 978L770 975L735 975L725 950L715 975L640 1000L590 1015Z" stroke="#000" stroke-width="3" stroke-linejoin="round"/>
              <rect x="188.500" y="39.500" width="172" height="149" fill="none" stroke="#6ff0f0" stroke-width="1.500"/>
            </svg>
            <div class="absolute left-[9px] top-[179px] w-[536px] h-[40px] bg-[#f2f2f4]/85 flex items-center pl-[7px] gap-[6px] text-[#111] tracking-[0]">©<span class="text-[#0078d7] underline decoration-1 underline-offset-2">Stadia Maps</span>©<span class="text-[#0078d7] underline decoration-1 underline-offset-2">OpenMapTiles</span>©<span class="text-[#0078d7] underline decoration-1 underline-offset-2">OpenStreetMap contributors</span></div>
          </div>
          <div class="flex items-center mt-[7px] ml-[10px] h-[33px] tracking-[-0.1px]">
            <span class="w-[28px] pl-[6px]">X:</span><div class="w-[130px] h-[32px] border-x border-[#d0d0d0] pl-[8px] pt-[3px] tracking-[0]">-8186323.8940</div>
            <span class="w-[31px] pl-[10px]">Y:</span><div class="w-[121px] h-[32px] border-x border-[#d0d0d0] pl-[6px] pt-[3px] tracking-[0]">5705217.0892</div>
            <div class="w-[112px] h-[31px] ml-[6px] bg-white border border-[#d2d2d2] flex items-center pl-[5px] pr-[7px]"><span class="w-[77px] overflow-hidden tracking-[-0.4px]">SPHERICAL</span><svg class="w-[12px] h-[8px] ml-auto text-[#555]"><use href="#chev"/></svg></div>
            <div class="h-[32px] ml-[2px] pl-[7px] pt-[3px] border-l border-[#d0d0d0]">Unknown Units</div>
          </div>
        </fieldset>
      </div>
    </div>
  </div>

  <!-- feature information dock -->
  <div class="w-[664px] border-l-2 border-[#a0a0a0] flex flex-col">
    <div class="h-[33px] flex border-b-2 border-white">
      <div class="w-[208px] bg-white flex items-center pl-[11px] tracking-[-0.1px]">Feature Information<svg class="w-[12px] h-[12px] ml-auto mr-[15px]"><use href="#x"/></svg></div>
      <svg class="w-[11px] h-[6px] ml-auto mt-[12px]"><use href="#caret"/></svg>
      <svg class="w-[12px] h-[12px] ml-[20px] mt-[9px]"><use href="#restore"/></svg>
      <svg class="w-[12px] h-[18px] ml-[20px] mt-[6px]"><use href="#pin"/></svg>
      <svg class="w-[12px] h-[12px] ml-[19px] mr-[10px] mt-[9px]"><use href="#x"/></svg>
    </div>
    <div class="h-[55px] flex items-center pl-[13px] pt-[4px]">
      <span class="w-[152px] tracking-[-0.15px]">Features Selected:</span>
      <div class="w-[20px] h-[29px] border border-[#e8e8e8] flex items-center justify-center text-[#858585]">1</div>
      <span class="ml-[10px] w-[49px]">of 1</span>
      <svg class="w-[50px] h-[12px]"><path d="M12 0V12L5 6ZM39 0V12L46 6Z" fill="#a8a8a8"/></svg>
      <span class="ml-auto w-[33px]">In:</span><span class="mr-[22px] tracking-[-0.03px]">Reprojector_2: Reprojected</span>
    </div>
    <div class="w-[635px] h-[1111px] ml-[13px] border-t-2 border-r border-b border-[#828790] pl-px flex">
      <div class="w-[609px] flex flex-col">
        <div class="h-[36px] flex bg-white">
          <div class="w-[254px] pl-[6px] pt-[6px] border-r border-[#e2e2e2]">Property</div>
          <div class="w-[48px] border-r border-[#e2e2e2] pt-[10px] pl-[8px]"><svg class="w-[26px] h-[18px]"><path d="M12 1.500L5 9L12 16.500M23 1.500L16 9L23 16.500" fill="none" stroke="#253540" stroke-width="4"/></svg></div>
          <div class="pl-[5px] pt-[6px]">Value</div>
        </div>
        <div id="props" class="h-[1048px] overflow-hidden bg-white"></div>
        <div class="h-[4px] w-[514px] ml-[26px] mt-[10px] rounded-full bg-[#868686]"></div>
      </div>
      <div class="w-[4px] h-[782px] ml-[10px] mt-[26px] rounded-full bg-[#868686]"></div>
    </div>
    <div class="flex items-center ml-[14px] mt-[10px]">
      <div class="w-[446px] h-[31px] bg-white border border-[#e6e6e6] border-b-2 border-b-[#868686] flex items-center pl-[13px] pr-[7px] text-[#858585]"><svg class="w-[24px] h-[24px] mr-[7px]"><use href="#mag"/></svg>Search<svg class="w-[12px] h-[8px] ml-auto text-[#555]"><use href="#chev"/></svg></div>
      <span class="ml-[9px] w-[24px]">in</span>
      <div class="w-[123px] h-[31px] bg-white border border-[#d2d2d2] flex items-center pl-[5px] pr-[7px]">Any<svg class="w-[12px] h-[8px] ml-auto text-[#555]"><use href="#chev"/></svg></div>
    </div>
  </div>
</main>

<!-- status bar -->
<footer class="h-[45px] border-t-2 border-[#a6a6a6] flex"><div class="w-[770px] h-[40px] border-r border-[#d8d8d8]"></div></footer>

<!-- windows taskbar -->
<div class="h-[72px] border-t-2 border-[#b0b0b0] bg-[#dadbdb] flex items-center">
  <svg class="w-[56px] h-[56px] ml-[28px] mt-[-4px]"><defs><linearGradient id="cl" x1="0" y1="0" x2="0" y2="1"><stop offset="0" stop-color="#d8e8fb"/><stop offset="1" stop-color="#8fb6ea"/></linearGradient></defs><path d="M10 38Q1 37 2 30Q3 24 9 24Q12 15 21 17Q28 18 29 25Q38 25 38 32Q38 38 31 38Z" fill="url(#cl)"/><rect x="14" y="2" width="36" height="24" rx="12" fill="#f3f3f3"/><text x="18" y="19" font-size="15.500" fill="#111" letter-spacing="-.2">-14°</text></svg>
  <svg class="w-[36px] h-[36px] ml-[272px] mt-[-1px]"><defs><linearGradient id="wl" x1="0" y1="0" x2="1" y2="1"><stop offset="0" stop-color="#4cc6f5"/><stop offset="1" stop-color="#0b70ce"/></linearGradient></defs><path d="M0 0h17v17H0zM19 0h17v17H19zM0 19h17v17H0zM19 19h17v17H19z" fill="url(#wl)"/></svg>
  <div class="w-[326px] h-[48px] ml-[21px] mt-[-2px] rounded-full bg-[#f4f4f4] border border-[#c6c6c6] flex items-center pl-[14px] pr-[8px] text-[#555] text-[19px]">
    <svg class="w-[24px] h-[24px] mr-[15px]"><circle cx="10.500" cy="10" r="7.500" fill="none" stroke="#222" stroke-width="2"/><path d="M16 15.500L22.500 22" stroke="#222" stroke-width="2.200"/></svg><span class="tracking-[0.15px]">Recherche</span>
    <svg class="w-[68px] h-[36px] ml-auto"><path d="M2 13L26 2L28 8L5 18Z" fill="#5d4a86"/><path d="M5 17H29V32Q17 36 8 32Z" fill="#7a52b8"/><path d="M8 10L12 14M15 7L19 11M22 4L26 8" stroke="#e6dcf5" stroke-width="2.500"/><path d="M5 18L29 17" stroke="#d8c8f0" stroke-width="2"/><rect x="40" y="7" width="24" height="22" rx="2" fill="#e9defa" stroke="#9a79d0" transform="rotate(6 50 18)"/><path d="M47 14L49.500 19L55 19.500L51 23L52 28L47.500 25.500L43 28L44 23L40 19.500L45 19Z" fill="#f6b42a"/><path d="M52 11H62M56 16H62" stroke="#9a79d0" stroke-width="1.500"/></svg>
  </div>
  <div id="apps" class="flex ml-[5px] h-[70px]"></div>
  <svg class="w-[14px] h-[9px] ml-[103px] mt-[-2px]"><path d="M1 8L7 2L13 8" fill="none" stroke="#111" stroke-width="1.600"/></svg>
  <svg class="w-[28px] h-[24px] ml-[28px]"><path d="M6 19Q1 18 2 13Q3 9 7 9Q9 3 15 4Q20 5 20 10Q24 11 24 15V19Z" fill="#7c7c7c" stroke="#444"/><circle cx="19" cy="17" r="6.500" fill="#d9232e"/><path d="M16.500 14.500L21.500 19.500M21.500 14.500L16.500 19.500" stroke="#fff" stroke-width="1.500"/></svg>
  <div class="ml-[15px] mt-[-2px] w-[54px] flex flex-col items-center text-[18px] leading-[23px]"><span>FRA</span><span>CAFR</span></div>
  <svg class="w-[24px] h-[20px] ml-[16px] mt-[-2px]"><path d="M1 7Q12 -3 23 7M4.500 11Q12 4 19.500 11M8 14.500Q12 11 16 14.500" fill="none" stroke="#111" stroke-width="1.600"/><circle cx="12" cy="17.500" r="1.800"/></svg>
  <svg class="w-[24px] h-[20px] ml-[12px] mt-[-2px]"><path d="M1 7H5L11 1.500V18.500L5 13H1ZM15 7L22 14M22 7L15 14" fill="none" stroke="#111" stroke-width="1.400"/></svg>
  <svg class="w-[26px] h-[16px] ml-[12px] mt-[-2px]"><rect x="1" y="1" width="21" height="13" rx="3" fill="none" stroke="#111" stroke-width="1.400"/><path d="M4 4H9V11H4ZM23 5V10H25V5Z"/></svg>
  <div class="ml-auto mr-[28px] mt-[-4px] flex flex-col items-end text-[18px] leading-[24px] tracking-[0]"><span>21:19</span><span>2025-01-28</span></div>
</div>

<script>
const use = (id, cls) => `<svg class="${cls}"><use href="#${id}"/></svg>`;

// navigator: [level, expander (0 none, 1 closed, 2 open), icon, label]
const nav = [
  [0,1,'reader','ilots-de...'],[0,1,'reader','MNS(te...'],[0,1,'reader','hm-200...'],[0,1,'trans','Transfor...'],
  [0,1,'bookmark','Bookm...'],[0,1,'user','User Pa...'],[0,1,'flow','FME Flo...'],[0,1,'db','Databas...'],
  [0,0,'wres','Worksp...'],[0,2,'wsp','Worksp...'],[1,0,'wsp','Pass...'],[1,0,'wsp','Na...'],[1,1,'wsp','Des...'],
  [1,1,'wsp','Log...'],[1,1,'wsp','Rea...'],[1,1,'wsp','Scri...'],[1,1,'wsp','Tran...']
];
const gallery = [
  [0,1,'trans','All (481)'],[0,1,'trans','Categoriz...'],[0,0,'trans','Embedde...'],
  [0,1,'trans','FME Hub'],[0,1,'trans','Recent (10)'],[0,0,'mag','Search Re...']
];
const exp = ['', use('chev','w-[12px] h-[8px] -rotate-90 text-[#8a8a8a] shrink-0'), use('chev','w-[14px] h-[9px] text-[#222] shrink-0')];
const tree = rows => rows.map(([l,e,i,t]) =>
  `<div class="h-[30px] flex items-center ${l ? 'pl-[38px]' : 'pl-[8px]'}"><div class="w-[16px] shrink-0 flex justify-center">${exp[e]}</div>${use(i,'w-[24px] h-[24px] ml-[11px] mr-[9px] shrink-0')}<span class="tracking-[-0.05px]">${t}</span></div>`).join('');
document.getElementById('nav').innerHTML = tree(nav);
document.getElementById('gallery').innerHTML = tree(gallery);

// feature properties: [kind, label, value]; kind: s = section, gN = group at level N, N = plain row at level N
const P = [
  ['s','Exposed Attribu...','','sigma'],['1','fme_basename','ilots-de-chaleur-2016'],['s','Unexposed Attri...','','nsigma'],
  ['1','geotiff_area_or_point','Area'],['1','geotiff_byte_order','LSB'],['1','geotiff_interleaving_t...','BSQ'],
  ['g1','geotiff_pyramid_lev...',''],
  ['g2','geotiff_pyramid...',''],['3','num_columns','1567'],['3','num_rows','1338'],
  ['g2','geotiff_pyramid...',''],['3','num_columns','784'],['3','num_rows','669'],
  ['g2','geotiff_pyramid...',''],['3','num_columns','392'],['3','num_rows','335'],
  ['g2','geotiff_pyramid...',''],['3','num_columns','196'],['3','num_rows','168'],
  ['1','geotiff_pyramid_num...','3'],['1','geotiff_type','geotiff_raster'],
  ['g1','FME Attributes (8)',''],['2','fme_dataset','D:\\cours\\Maîtrise UQAM\\intégration ...'],['2','fme_feature_type','COG'],
  ['2','fme_geometry','fme_aggregate'],['2','fme_type','fme_raster'],['2','multi_reader_full_id','0'],['2','multi_reader_id','0'],
  ['2','multi_reader_key...','COG_1'],['2','multi_reader_type','COG'],
  ['s','Geometry','','geom'],['1','Coordinate System','<span class="text-[#0078d7] underline underline-offset-2">EPSG:32188</span>'],
  ['1','Dimension','2D'],['1','Number of Vertices','5'],
  ['1','Min Extents','267511.230999998, 5029199.067799311'],['1','Max Extents','306686.2309998315, 5062649.067799455'],
  ['r','Raster',''],['2','Min Extents','267511.230999998, 5029199.067799311'],['2','Max Extents','306686.2309998315, 5062649.067799455']
];
const down = use('chev','w-[13px] h-[8px] text-[#222] shrink-0');
const name = ([k,t,v,i]) => ({
  's': `<div class="pl-[8px] flex items-center w-full font-bold tracking-[-0.1px]">${down}${use(i,'w-[24px] h-[24px] ml-[9px] mr-[9px] shrink-0')}<span class="w-[167px] shrink-0">${t}</span>${use('info','w-[24px] h-[24px] shrink-0')}</div>`,
  'g1': `<div class="pl-[38px] flex items-center font-bold tracking-[-0.1px]">${down}<span class="ml-[13px]">${t}</span></div>`,
  'g2': `<div class="pl-[68px] flex items-center font-bold tracking-[-0.1px]">${down}<span class="ml-[13px]">${t}</span></div>`,
  'r': `<div class="pl-[38px] flex items-center font-bold tracking-[-0.3px]">${down}${use('rast','w-[21px] h-[21px] ml-[14px] mr-[11px]')}${t}</div>`,
  '1': `<div class="pl-[64px]">${t}</div>`, '2': `<div class="pl-[94px]">${t}</div>`, '3': `<div class="pl-[124px]">${t}</div>`
})[k];
document.getElementById('props').innerHTML = P.map((r, n) =>
  `<div class="h-[27px] flex items-center ${n % 2 ? 'bg-[#e8e6e2]' : ''}"><div class="w-[258px] shrink-0 flex tracking-[-0.1px]">${name(r)}</div><div class="w-[48px] shrink-0">${n === 1 ? 'var...' : ''}</div><div class="flex-1 overflow-hidden tracking-[0.05px]">${r[2]}</div></div>`).join('');

// taskbar: [drawing, state (0 idle, 1 running, 2 active)]
const apps = [
  ['<path d="M12 2H34V26H12Z" fill="#f2f2f2"/><path d="M2 10H20V34H2Z" fill="#222"/><path d="M12 10H20V26H12Z" fill="#aaa"/>',0],
  ['<path d="M11 9V3Q11 1 13 1H23Q25 1 25 3V9" fill="none" stroke="#2aa3ea" stroke-width="2.500"/><rect x="1" y="7" width="34" height="28" rx="4" fill="#14549e"/><path d="M10 12h7v7h-7z" fill="#f25022"/><path d="M19 12h7v7h-7z" fill="#7fba00"/><path d="M10 21h7v7h-7z" fill="#00a4ef"/><path d="M19 21h7v7h-7z" fill="#ffb900"/>',0],
  ['<path d="M0 4Q0 2 2 2H13L17 6H34Q36 6 36 8V33H0Z" fill="#e8a917"/><path d="M0 9H36V32Q36 34 34 34H2Q0 34 0 32Z" fill="#ffd257"/><path d="M6 34V27Q6 24 9 24H27Q30 24 30 27V34Z" fill="#1a7fd4"/>',1],
  ['<circle cx="18" cy="18" r="17.500" fill="#0f6fc4"/><path d="M2 13Q6 1 18 .5Q34 1 35.500 16Q35 24 26 24Q21 23 23 19Q23 11 14 10Q6 10 2 16Z" fill="#3fd08c"/><path d="M2 13Q6 1 18 .5Q24 1 28 4Q14 4 10 12Q5 11 2 16Z" fill="#2bb4e0"/><path d="M14 20Q16 29 28 29L33 27Q30 33 22 35Q13 32 12 24Z" fill="#0a4a90"/><path d="M14 19Q14 27 23 27Q31 27 35.500 23V30L30 28Q22 31 17 27Z" fill="#dadbdb"/>',1],
  ['<circle cx="20" cy="6" r="5" fill="#7b83eb"/><circle cx="31" cy="9" r="3.500" fill="#5059c9"/><path d="M14 13H35V26Q34 31 29 31Q26 35 20 35Q13 34 12 26Z" fill="#6a72dc"/><rect x="0" y="9" width="19" height="19" rx="2" fill="#4b53bc"/><path d="M5 13.500H14M9.500 13.500V24" stroke="#fff" stroke-width="2.200"/>',0],
  ['<rect x="1" y="1" width="34" height="34" rx="5" fill="#b30b00"/><path d="M8 27Q11 29 16 19Q19 10 17 8Q15 7 16 13Q19 24 27 25Q30 24 28 22Q22 20 11 25Q7 27 8 27Z" fill="none" stroke="#fff" stroke-width="2"/>',0],
  ['<path d="M6 13L21 2L36 13V30Q36 33 33 33H9Q6 33 6 30Z" fill="#0f62b4"/><path d="M10 6H32V21L22 27L10 20Z" fill="#3fb0f0"/><path d="M14 6L32 6V12L20 14Z" fill="#7fd0fa"/><path d="M36 14L10 33H33Q36 33 36 30Z" fill="#28a8ea"/><rect x="0" y="12" width="17" height="17" rx="2" fill="#0a5fb4"/><circle cx="8.500" cy="20.500" r="4" fill="none" stroke="#fff" stroke-width="2"/>',0],
  ['<path d="M26 0L36 4V32L26 36L10 21L4 26L0 24L8 18L0 12L4 10L10 15ZM26 10L16 18L26 26Z" fill="#1f8ad2" fill-rule="evenodd"/><path d="M26 0L36 4V32L26 36Z" fill="#2fa6ee"/>',0],
  ['<rect x="11" y="2" width="24" height="28" rx="2" fill="#1490df"/><path d="M11 9H35V16H11Z" fill="#28a8ea"/><path d="M11 20H35V32Q35 34 33 34H11Z" fill="#0f5fae"/><path d="M23 9H35V16H23Z" fill="#50d9ff"/><rect x="0" y="9" width="18" height="18" rx="2" fill="#0a5cb0"/><circle cx="9" cy="18" r="4.200" fill="none" stroke="#fff" stroke-width="2"/>',0],
  ['<path d="M8 2Q1 3 2 12Q4 23 9 24Q12 23 12 20Q13 34 18 35.500Q24 34 23 24Q29 26 34 22L29 21Q36 12 34 5Q30 0 23 2Q15 0 8 2Z" fill="#336791" stroke="#f4f4f4" stroke-width="1.500"/><path d="M13 6Q11 14 13 20M23 4Q19 9 22 16V24M17 8V10M28 8Q26 12 28 17" fill="none" stroke="#fff" stroke-width="1.500"/>',0],
  ['<rect width="36" height="36" fill="#1b1a1c"/><path d="M18 5Q31 6 31 18Q30 28 22 31V26Q22 24 21 23Q27 22 27 16Q27 13 25 11L25 8Q23 8 21 9.500H15Q13 8 11 8L11 11Q9 13 9 16Q9 22 15 23Q14 24 14 26Q10 27 9 24Q8 27 14 28V31Q6 28 5 18Q6 6 18 5Z" fill="#fff"/>',0],
  ['<path d="M12 3H24L36 23H24Z" fill="#fbbc04"/><path d="M12 3L18 13L7 32L1 23Z" fill="#10a055"/><path d="M12 23H36L30 33H7Z" fill="#4285f4"/><path d="M27 23H36L30 33Z" fill="#ea4335"/>',0],
  ['<circle cx="18" cy="18" r="14" fill="none" stroke="#6f7d8b" stroke-width="7" stroke-dasharray="7.500 3.490"/><circle cx="18" cy="18" r="11.500" fill="none" stroke="#7b8896" stroke-width="6"/><circle cx="18" cy="18" r="7" fill="#1566b7" stroke="#e8eef5" stroke-width="1.500"/>',1],
  ['<use href="#fme" width="36" height="36"/>',2],
  ['<circle cx="17" cy="17" r="13" fill="none" stroke="#7cab32" stroke-width="7.500"/><path d="M20 20L27 20L36 32L33 36H27L18 26Z" fill="#6a9f2a"/><path d="M14 12L23 17L19 22H14Z" fill="#f0923b"/>',1],
  ['<rect x="1" y="4" width="34" height="29" rx="2" fill="#3b3b3b"/><path d="M1 4H35V9H1Z" fill="#767676"/><path d="M13 4H24V9H13Z" fill="#aaa"/><path d="M7 14L13 20L7 26M15 27H24" fill="none" stroke="#fff" stroke-width="2.200"/>',1]
];
const mark = ['', '<div class="absolute bottom-[6px] w-[9px] h-[4px] rounded-full bg-[#777]"></div>', '<div class="absolute bottom-[6px] w-[24px] h-[4px] rounded-full bg-[#0a78d4]"></div>'];
document.getElementById('apps').innerHTML = apps.map(([d,s]) =>
  `<div class="w-[66.07px] h-[70px] relative flex justify-center items-center"><div class="w-[57px] h-[57px] rounded-[6px] flex items-center justify-center ${s === 2 ? 'bg-[#ebebeb]' : ''}"><svg class="w-[36px] h-[36px] mb-[2px]">${d}</svg></div>${mark[s]}</div>`).join('');
</script>
</body>
</html>
